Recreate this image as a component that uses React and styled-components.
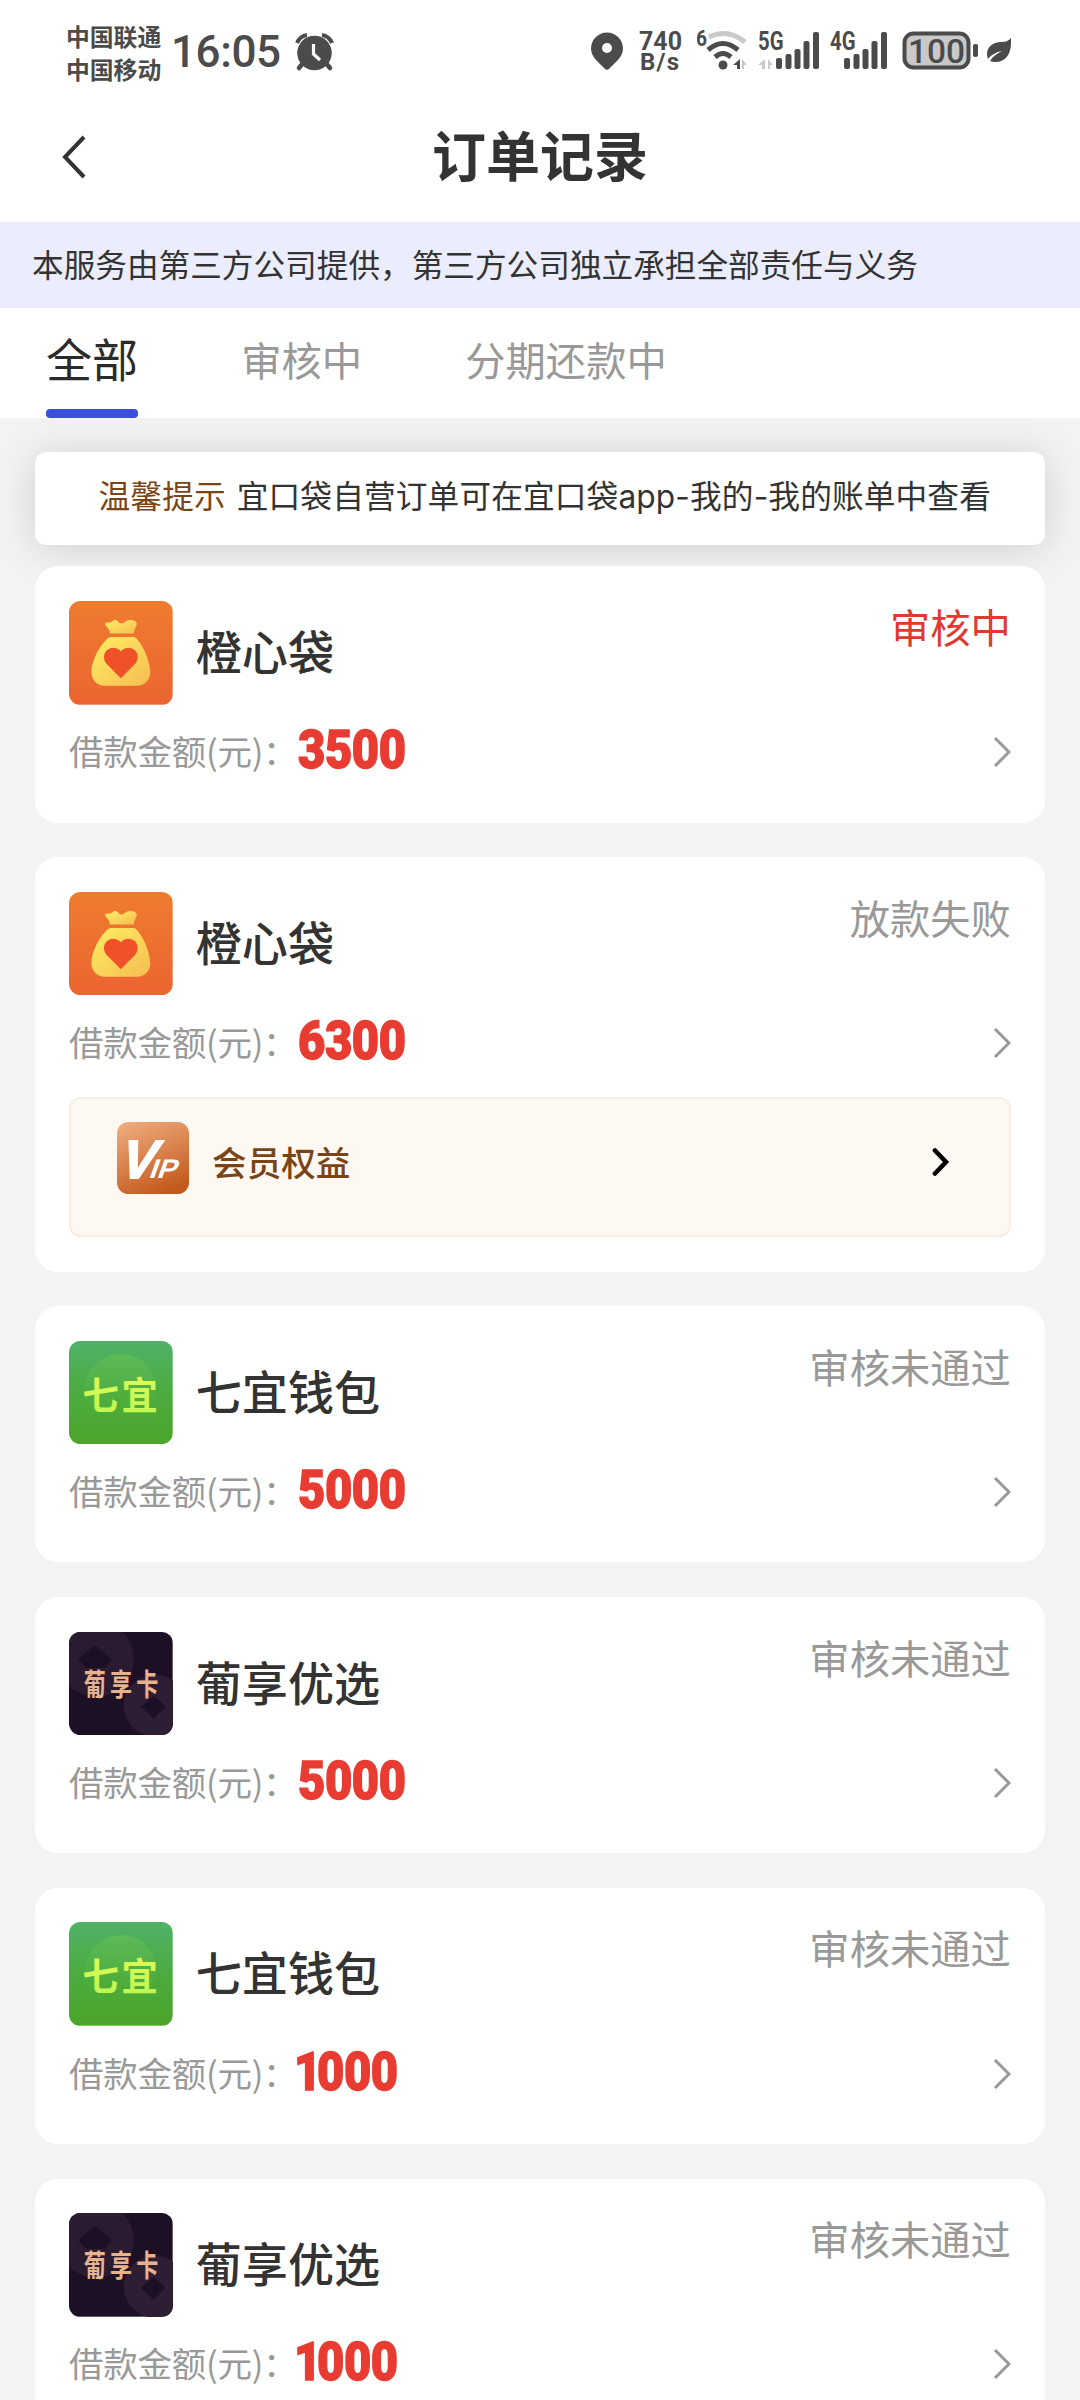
import React from "react";
import styled, { createGlobalStyle } from "styled-components";

const GlobalStyle = createGlobalStyle`
* {
box-sizing: border-box;
}
body {
margin: 0;
background: #f3f3f3;
color: #333;
font-family: "Noto Sans CJK SC", sans-serif;
}
`

const Page = styled.div`
height: 2400px;
width: 1080px;
overflow: hidden;
display: flex;
flex-direction: column;
`

const StatusBar = styled.div`
height: 102px;
flex-shrink: 0;
background: #fff;
display: flex;
align-items: flex-start;
padding: 19px 68px 0 66px;
`
const Carriers = styled.div`
font-size: 23.8px;
font-weight: 700;
line-height: 33px;
color: #4b4b4b;
`
const Clock = styled.svg`
margin: 1px 0 0 11px;
`
const StatusIcons = styled.div`
display: flex;
margin: 1px 0 0 auto;
`
const StatusText = styled.text`
font-family: Roboto, sans-serif;
font-weight: ${props => props.$weight || 700};
fill: #4b4b4b;
`

const Header = styled.div`
height: 120px;
flex-shrink: 0;
background: #fff;
display: grid;
grid-template-columns: 120px 1fr 120px;
align-items: center;
padding-bottom: 12px;
`
const Back = styled.svg`
margin: 2px 0 0 60px;
`
const Title = styled.h1`
margin: 0;
padding-bottom: 4px;
text-align: center;
font-size: 54px;
font-weight: 700;
line-height: 70px;
`
const Notice = styled.div`
height: 86px;
flex-shrink: 0;
background: #ebedfc;
display: flex;
align-items: center;
padding: 0 0 4px 32px;
font-size: 31.65px;
`
const Tabs = styled.div`
height: 110px;
flex-shrink: 0;
background: #fff;
display: flex;
gap: 103.2px;
padding-left: 46px;
`
const Tab = styled.div`
height: 110px;
line-height: ${props => props.$active ? "98px" : "102px"};
font-size: ${props => props.$active ? "46px" : "40.3px"};
color: ${props => props.$active ? "#2b2b2b" : "#999"};
display: flex;
flex-direction: column;
justify-content: space-between;
`
const Underline = styled.div`
height: 9px;
border-radius: 4px;
background: #3c4fdb;
`

const Content = styled.div`
padding: 34px 34.56px 0;
display: flex;
flex-direction: column;
overflow: hidden;
`
const Tip = styled.div`
height: 93px;
flex-shrink: 0;
margin-bottom: 21.4px;
border-radius: 11.5px;
background: #fff;
box-shadow: 0 3px 40px rgba(0, 0, 0, 0.15);
display: flex;
align-items: center;
padding: 0 0 9px 64px;
font-family: Inter, "Noto Sans CJK SC", sans-serif;
font-size: 31.68px;
letter-spacing: 0.13px;
white-space: pre;
`
const TipLabel = styled.span`
color: #7a4516;
margin-right: 11px;
`
const CardList = styled.div`
display: flex;
flex-direction: column;
gap: 34.56px;
position: relative;
`
const Card = styled.div`
background: #fff;
border-radius: 23px;
padding: 34.56px;
flex-shrink: 0;
`
const CardTop = styled.div`
height: 103.68px;
display: flex;
`
const Name = styled.div`
margin-left: 23px;
font-size: 46.08px;
font-weight: 500;
line-height: 99px;
flex: 1;
`
const Status = styled.div`
font-size: 40.32px;
line-height: 50px;
color: ${props => props.$pending ? "#e03a30" : "#999"};
`
const CardRow = styled.div`
height: 58px;
margin: 18.5px 0 7px;
display: flex;
align-items: center;
justify-content: space-between;
`
const LoanLabel = styled.div`
padding-bottom: 3px;
font-size: 34.56px;
letter-spacing: -0.3px;
line-height: 55px;
color: #999;
display: flex;
white-space: pre;
`
const Amount = styled.span`
width: 114px;
margin-left: ${props => props.$narrow ? "-3px" : "0.5px"};
font-family: Roboto, sans-serif;
font-size: 54.5px;
font-weight: 900;
letter-spacing: -0.5px;
line-height: 52px;
color: #e83c32;
-webkit-text-stroke: 1.4px #e83c32;
transform: scaleX(0.865);
transform-origin: left;

&::first-letter {
letter-spacing: ${props => props.$narrow ? "-5px" : "-0.5px"};
}
`
const Benefits = styled.div`
height: 140px;
margin-top: 25.2px;
border: 2px solid #f8ede3;
border-radius: 11.5px;
background: #fdf8f1;
display: flex;
align-items: flex-start;
padding: 23px 59px 0 46px;
`
const BenefitsLabel = styled.div`
margin-left: 23px;
flex: 1;
font-size: 34.56px;
font-weight: 500;
line-height: 78px;
color: #7a4516;
`
const BenefitsArrow = styled.svg`
margin-top: 25px;
`
const Logo = styled.svg`
border-radius: 11.5px;
flex-shrink: 0;
`
const LogoText = styled.text`
font-family: "Noto Sans CJK SC", sans-serif;
font-weight: ${props => props.$weight};
font-size: ${props => props.$size}px;
`
const VipText = styled.text`
font-family: "Liberation Sans", sans-serif;
font-weight: 700;
fill: #fff;
`

const BagLogo = () => (
    <Logo width="103.68" height="103.68" viewBox="0 0 104 104">
        <defs>
            <linearGradient id="bagBg" x1="0" y1="0" x2="0" y2="1">
                <stop offset="0" stopColor="#ee7c2f"/>
                <stop offset="1" stopColor="#ec6430"/>
            </linearGradient>
            <linearGradient id="bag" x1="0" y1="0" x2="1" y2="1">
                <stop offset="0" stopColor="#ffee62"/>
                <stop offset="1" stopColor="#f5bd52"/>
            </linearGradient>
        </defs>
        <rect width="104" height="104" fill="url(#bagBg)"/>
        <path d="M36.5 24C35.5 21 38 21.500 41 21.500C43 21.500 43.500 19 46.500 19C49 19 50 22.500 52.500 22.500C55.500 22.500 57 19 61 19C66 19 69.500 21 67.500 25C66 28 65.500 29 65 32.500H41C41 29 39 27.500 36.500 24Z" fill="url(#bag)"/>
        <path d="M42 36H65C69 36 81 55 81.500 71C81.800 79 76 85 68 85H36C28 85 22.300 79 22.500 71C23 55 37 36 42 36Z" fill="url(#bag)"/>
        <path d="M52 77.500L38.500 64C33.500 59 34.500 52 38.500 49C43 45.500 48.500 46.500 52 50.500C55.500 46.500 61 45.500 65.500 49C69.500 52 70.500 59 65.500 64Z" fill="#ef5128"/>
    </Logo>
)

const QiyiLogo = () => (
    <Logo width="103.68" height="103.68" viewBox="0 0 104 104">
        <defs>
            <linearGradient id="qiyiBg" x1="0" y1="0" x2="0" y2="1">
                <stop offset="0" stopColor="#4fb268"/>
                <stop offset="0.55" stopColor="#4bab3b"/>
                <stop offset="1" stopColor="#4ca52b"/>
            </linearGradient>
            <linearGradient id="qiyiDisc" x1="0" y1="0" x2="0" y2="1">
                <stop offset="0" stopColor="#5dbb58"/>
                <stop offset="1" stopColor="#4ba92f" stopOpacity="0.2"/>
            </linearGradient>
            <linearGradient id="qiyiText" x1="0" y1="0" x2="0" y2="1">
                <stop offset="0" stopColor="#e8fb55"/>
                <stop offset="1" stopColor="#b9f552"/>
            </linearGradient>
        </defs>
        <rect width="104" height="104" fill="url(#qiyiBg)"/>
        <circle cx="52" cy="49" r="36" fill="url(#qiyiDisc)"/>
        <LogoText $size={38} $weight={700} transform="scale(0.96 1)" x="14" y="68.500" textLength="79" fill="url(#qiyiText)">七宜</LogoText>
    </Logo>
)

const PuxiangLogo = () => (
    <Logo width="103.68" height="103.68" viewBox="0 0 104 104">
        <rect width="104" height="104" fill="#1e1024"/>
        <circle cx="27" cy="27" r="38" fill="#2a1b31"/>
        <circle cx="86" cy="74" r="31" fill="#2e1e34"/>
        <path d="M26 13L43 27L36 36H17L9 27Z" fill="#1e1024"/>
        <path d="M85 64L97 75L85 87L72 75Z" fill="#1e1024"/>
        <LogoText $size={30} $weight={700} transform="scale(0.74 1)" x="20" y="63" textLength="101" fill="#e6b38c">葡享卡</LogoText>
    </Logo>
)

const VipLogo = () => (
    <Logo width="72" height="72" viewBox="0 0 72 72">
        <defs>
            <linearGradient id="vipBg" x1="0.2" y1="0" x2="0.6" y2="1">
                <stop offset="0" stopColor="#eeaa7a"/>
                <stop offset="1" stopColor="#c35a1d"/>
            </linearGradient>
        </defs>
        <rect width="72" height="72" fill="url(#vipBg)"/>
        <VipText transform="translate(0 56) skewX(-18)" fontSize="54" textLength="35" lengthAdjust="spacingAndGlyphs" stroke="#fff" strokeWidth="1.800">V</VipText>
        <VipText transform="translate(31 56) skewX(-20)" fontSize="27" textLength="27" lengthAdjust="spacingAndGlyphs">IP</VipText>
    </Logo>
)

const logos = { bag: BagLogo, qiyi: QiyiLogo, puxiang: PuxiangLogo }

const Signal = ({ label, arrows, offset = 0 }) => (
    <svg width={73 - offset} height="60" viewBox={`${offset} 0 ${73 - offset} 60`}>
        <StatusText x={offset ? 16 : 12} y="30" fontSize="25" textLength="25.500" lengthAdjust="spacingAndGlyphs">{label}</StatusText>
        {arrows && <path d="M19 39V49H16V45H12ZM22 39L27 45H24V49H22Z" fill="#c9c9c9"/>}
        <g fill="#4b4b4b">
            <rect x="30" y="38" width="6" height="11" rx="2"/>
            <rect x="39.500" y="34" width="6" height="15" rx="2"/>
            <rect x="48.500" y="29" width="6" height="20" rx="2"/>
            <rect x="57.500" y="21" width="6" height="28" rx="2"/>
            <rect x="67" y="12" width="6" height="37" rx="2"/>
        </g>
    </svg>
)

const PhoneStatus = () => (
    <StatusBar>
        <Carriers>
            <div>中国联通</div>
            <div>中国移动</div>
        </Carriers>
        <Clock width="164" height="60" viewBox="0 0 164 60">
            <StatusText $weight={500} x="-1" y="47" fontSize="44" textLength="110">16:05</StatusText>
            <g transform="translate(123 13)" fill="#4b4b4b">
                <circle cx="19.500" cy="20" r="17.300"/>
                <path d="M8 30L4 35M31 30L35 35" stroke="#4b4b4b" strokeWidth="4.500" strokeLinecap="round"/>
                <path d="M2 10Q5 3 12 2M37 10Q34 3 27 2" stroke="#4b4b4b" strokeWidth="4" fill="none"/>
                <path d="M18.500 11V21L25 27" stroke="#fff" strokeWidth="3.200" fill="none"/>
            </g>
        </Clock>
        <StatusIcons>
            <svg width="106" height="60" viewBox="0 0 106 60">
                <path d="M16 12.500A16 16 0 0 0 0 28.500C0 38 9 43 13.500 48.500Q16 51 18.500 48.500C23 43 32 38 32 28.500A16 16 0 0 0 16 12.500ZM16 23A5 5 0 1 1 16 33A5 5 0 1 1 16 23Z" fill="#4b4b4b"/>
                <StatusText x="48" y="30" fontSize="25" textLength="43">740</StatusText>
                <StatusText x="49" y="49.500" fontSize="24" textLength="39">B/s</StatusText>
            </svg>
            <svg width="49" height="60" viewBox="0 0 49 60">
                <StatusText x="-1" y="26" fontSize="22" textLength="11" lengthAdjust="spacingAndGlyphs">6</StatusText>
                <g fill="none" strokeWidth="5">
                    <path d="M12 17Q31 8 48 22" stroke="#c9c9c9"/>
                    <path d="M11 30Q26 17 41 30" stroke="#4b4b4b"/>
                    <path d="M18 37Q26 30 34 37" stroke="#4b4b4b"/>
                </g>
                <circle cx="26" cy="45" r="4.500" fill="#4b4b4b"/>
                <path d="M43 39V49H40V45H36Z" fill="#4b4b4b"/>
                <path d="M45 39L50 45H47V49H45Z" fill="#c9c9c9"/>
            </svg>
            <Signal label="5G" arrows/>
            <Signal label="4G" offset={5}/>
            <svg width="125" height="60" viewBox="0 0 125 60">
                <rect x="17.500" y="13.500" width="64" height="34" rx="9" fill="#c9c9c9" stroke="#4b4b4b" strokeWidth="4"/>
                <StatusText $weight={500} x="21" y="42.500" fontSize="34" textLength="57" lengthAdjust="spacingAndGlyphs">100</StatusText>
                <rect x="86" y="24" width="5" height="13" rx="2" fill="#4b4b4b"/>
                <path d="M124 18C125 34 119 42 108 42Q105 42 103 41C106 36 111 33 115 31C109 32 104 35 101 39C97 26 108 22 114 22C119 22 121 21 124 18Z" fill="#4b4b4b"/>
            </svg>
        </StatusIcons>
    </StatusBar>
)

const Order = ({ logo, name, status, pending, amount, vip }) => {
    const OrderLogo = logos[logo]
    return (
        <Card>
            <CardTop>
                <OrderLogo/>
                <Name>{name}</Name>
                <Status $pending={pending}>{status}</Status>
            </CardTop>
            <CardRow>
                <LoanLabel>借款金额(元)：<Amount $narrow={amount.startsWith("1")}>{amount}</Amount></LoanLabel>
                <svg width="18" height="32" viewBox="0 0 18 32">
                    <path d="M2 2L16 16L2 30" fill="none" stroke="#999" strokeWidth="3"/>
                </svg>
            </CardRow>
            {vip && <Benefits>
                <VipLogo/>
                <BenefitsLabel>会员权益</BenefitsLabel>
                <BenefitsArrow width="18" height="30" viewBox="0 0 18 30">
                    <path d="M3 3.500L14 15L3 26.500" fill="none" stroke="#000" strokeWidth="4.600" strokeLinecap="round"/>
                </BenefitsArrow>
            </Benefits>}
        </Card>
    )
}

const orders = [
    { logo: "bag", name: "橙心袋", status: "审核中", pending: true, amount: "3500" },
    { logo: "bag", name: "橙心袋", status: "放款失败", amount: "6300", vip: true },
    { logo: "qiyi", name: "七宜钱包", status: "审核未通过", amount: "5000" },
    { logo: "puxiang", name: "葡享优选", status: "审核未通过", amount: "5000" },
    { logo: "qiyi", name: "七宜钱包", status: "审核未通过", amount: "1000" },
    { logo: "puxiang", name: "葡享优选", status: "审核未通过", amount: "1000" },
]

const App = () => {
    return (
        <Page>
            <GlobalStyle/>
            <PhoneStatus/>
            <Header>
                <Back width="28" height="46" viewBox="0 0 28 46">
                    <path d="M24 3L5 23L24 43" fill="none" stroke="#333" strokeWidth="4"/>
                </Back>
                <Title>订单记录</Title>
            </Header>
            <Notice>本服务由第三方公司提供，第三方公司独立承担全部责任与义务</Notice>
            <Tabs>
                <Tab $active>全部<Underline/></Tab>
                <Tab>审核中</Tab>
                <Tab>分期还款中</Tab>
            </Tabs>
            <Content>
                <Tip><TipLabel>温馨提示</TipLabel>宜口袋自营订单可在宜口袋app-我的-我的账单中查看</Tip>
                <CardList>
                    {orders.map((order, i) => <Order key={i} {...order}/>)}
                </CardList>
            </Content>
        </Page>
    )
}

export default App
